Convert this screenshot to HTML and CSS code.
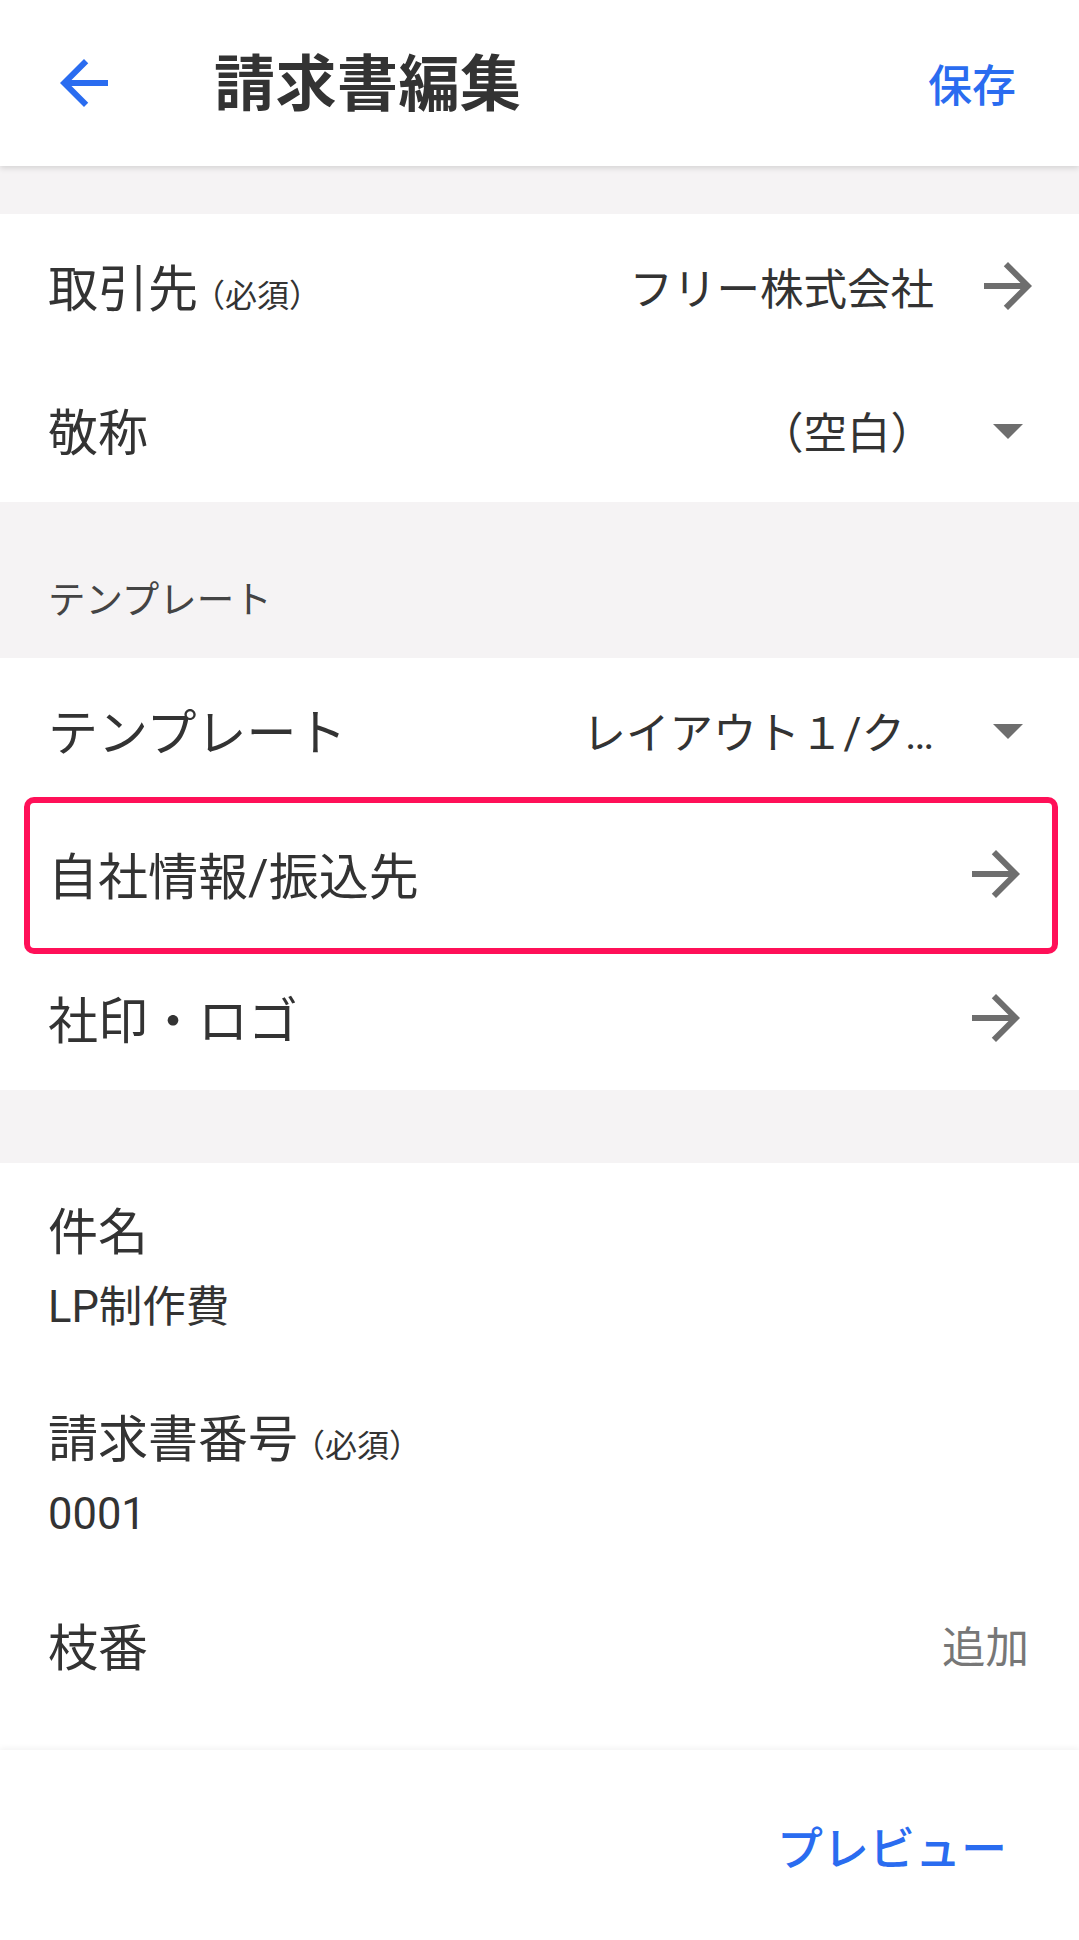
FILE: index.html
```html
<!DOCTYPE html>
<html lang="ja">
<head>
    <meta charset="UTF-8">
    <meta name="viewport" content="width=device-width, initial-scale=1.0">
    <title>請求書編集</title>
    <link rel="stylesheet" href="styles.css">
</head>
<body>
    <header class="appbar">
        <button class="back-btn" aria-label="戻る">
            <svg viewBox="0 0 24 24" width="72" height="72"><path d="M20 11H7.83l5.59-5.59L12 4l-8 8 8 8 1.41-1.41L7.83 13H20v-2z"/></svg>
        </button>
        <h1 class="appbar-title">請求書編集</h1>
        <a class="appbar-action" href="#">保存</a>
    </header>

    <main class="content">
        <div class="spacer"></div>

        <section class="group">
            <div class="row">
                <span class="label">取引先<small class="req">（必須）</small></span>
                <span class="value">フリー株式会社</span>
                <svg class="icon" viewBox="0 0 24 24" width="72" height="72"><path d="M12 4l-1.41 1.41L16.17 11H4v2h12.17l-5.58 5.59L12 20l8-8z"/></svg>
            </div>
            <div class="row">
                <span class="label">敬称</span>
                <span class="value">（空白）</span>
                <svg class="icon" viewBox="0 0 24 24" width="72" height="72"><path d="M7 10l5 5 5-5z"/></svg>
            </div>
        </section>

        <div class="section-title">テンプレート</div>

        <section class="group">
            <div class="row">
                <span class="label">テンプレート</span>
                <span class="value">レイアウト１/ク…</span>
                <svg class="icon" viewBox="0 0 24 24" width="72" height="72"><path d="M7 10l5 5 5-5z"/></svg>
            </div>
            <div class="row row-link highlighted">
                <span class="label">自社情報/振込先</span>
                <svg class="icon" viewBox="0 0 24 24" width="72" height="72"><path d="M12 4l-1.41 1.41L16.17 11H4v2h12.17l-5.58 5.59L12 20l8-8z"/></svg>
            </div>
            <div class="row row-link">
                <span class="label">社印・ロゴ</span>
                <svg class="icon" viewBox="0 0 24 24" width="72" height="72"><path d="M12 4l-1.41 1.41L16.17 11H4v2h12.17l-5.58 5.59L12 20l8-8z"/></svg>
            </div>
        </section>

        <div class="spacer spacer-sm"></div>

        <section class="group group-fill">
            <div class="field">
                <div class="label">件名</div>
                <div class="field-value">LP制作費</div>
            </div>
            <div class="field">
                <div class="label">請求書番号<small class="req">（必須）</small></div>
                <div class="field-value">0001</div>
            </div>
            <div class="field field-inline">
                <div class="label">枝番</div>
                <a class="add-link" href="#">追加</a>
            </div>
        </section>
    </main>

    <footer class="bottombar">
        <a class="preview-link" href="#">プレビュー</a>
    </footer>
</body>
</html>
```

FILE: styles.css
```css
* {
    box-sizing: border-box;
}
html, body {
    margin: 0;
    padding: 0;
}
body {
    width: 1079px;
    height: 1940px;
    display: flex;
    flex-direction: column;
    background: #f5f3f4;
    font-family: Roboto, "Noto Sans CJK JP", sans-serif;
    color: #333;
    overflow: hidden;
}
a {
    text-decoration: none;
}

/* app bar */
.appbar {
    height: 166px;
    flex-shrink: 0;
    display: flex;
    align-items: center;
    padding: 0 63px 0 48px;
    background: #fff;
    box-shadow: 0 2px 6px rgba(0, 0, 0, 0.14);
    position: relative;
    z-index: 2;
}
.back-btn {
    padding: 0;
    border: none;
    background: none;
    display: flex;
    fill: #2a6cf0;
}
.appbar-title {
    margin: 4px 0 0 94px;
    font-size: 61px;
    font-weight: 700;
    line-height: 1;
    letter-spacing: 0.5px;
    color: #333;
}
.appbar-action {
    margin-left: auto;
    font-size: 44px;
    font-weight: 500;
    color: #2a6cf0;
}

/* content */
.content {
    flex: 1;
    display: flex;
    flex-direction: column;
}
.spacer {
    height: 48px;
}
.spacer-sm {
    height: 73px;
}
.group {
    background: #fff;
}
.group-fill {
    flex: 1;
}
.section-title {
    height: 156px;
    display: flex;
    align-items: flex-end;
    padding: 0 0 34px 48px;
    font-size: 37.5px;
    line-height: 48px;
    color: #444;
}

.row {
    height: 144px;
    display: flex;
    align-items: center;
    padding: 0 35px 0 48px;
    position: relative;
}
.label {
    font-size: 50px;
    line-height: 64px;
    color: #333;
}
.row .label {
    padding-top: 7px;
}
.req {
    font-size: 32px;
    line-height: 1;
    margin-left: -5px;
    color: #333;
}
.value {
    margin-left: auto;
    margin-right: 38px;
    font-size: 43.5px;
    white-space: nowrap;
    color: #333;
}
.icon {
    fill: #6e6e6e;
    flex-shrink: 0;
}
.row-link {
    padding-right: 47px;
}
.row-link .icon {
    margin-left: auto;
}

/* annotation frame around the highlighted row */
.highlighted::after {
    content: "";
    position: absolute;
    top: -5px;
    bottom: -8px;
    left: 24px;
    right: 21px;
    border: 6px solid #ff1058;
    border-radius: 10px;
}

.field {
    padding: 38px 48px 29px 48px;
}
.field-value {
    margin-top: 10px;
    font-size: 43.5px;
    line-height: 66px;
    color: #333;
}
.field-inline {
    display: flex;
    align-items: center;
    justify-content: space-between;
    padding-top: 40px;
    padding-right: 50px;
}
.add-link {
    font-size: 43.5px;
    line-height: 64px;
    color: #777;
}

/* bottom bar */
.bottombar {
    height: 190px;
    flex-shrink: 0;
    display: flex;
    align-items: center;
    justify-content: flex-end;
    padding-right: 72px;
    background: #fff;
    box-shadow: 0 -2px 6px rgba(0, 0, 0, 0.05);
    position: relative;
}
.preview-link {
    font-size: 46px;
    font-weight: 500;
    color: #2a6cf0;
}
```
